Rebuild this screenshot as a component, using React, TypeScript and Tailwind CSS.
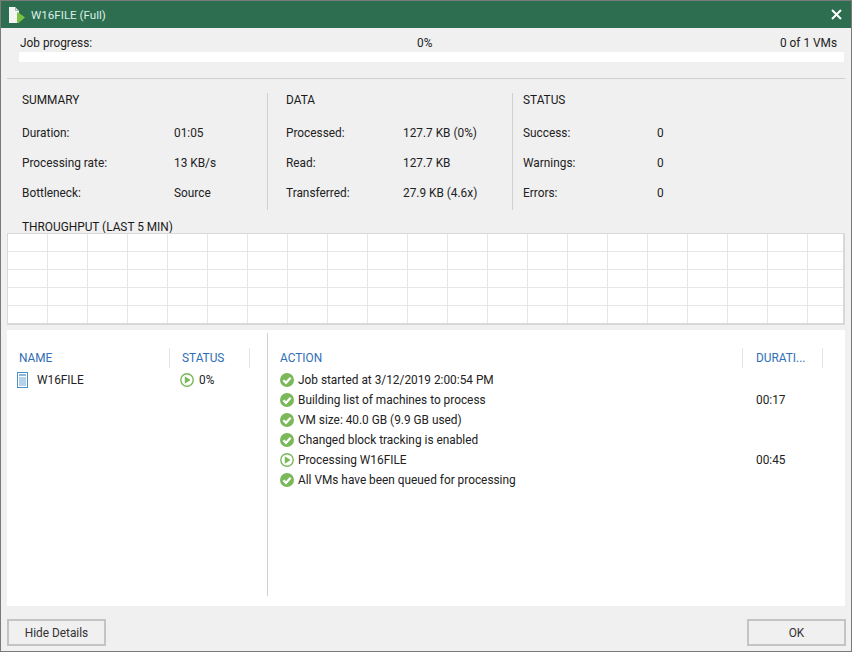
// Job session window: progress, stats, throughput grid and action log

const FONT = "font-['Roboto','Noto_Sans',sans-serif]";

type Stat = { label: string; value: string };

const summary: Stat[] = [
  { label: 'Duration:', value: '01:05' },
  { label: 'Processing rate:', value: '13 KB/s' },
  { label: 'Bottleneck:', value: 'Source' },
];
const data: Stat[] = [
  { label: 'Processed:', value: '127.7 KB (0%)' },
  { label: 'Read:', value: '127.7 KB' },
  { label: 'Transferred:', value: '27.9 KB (4.6x)' },
];
const status: Stat[] = [
  { label: 'Success:', value: '0' },
  { label: 'Warnings:', value: '0' },
  { label: 'Errors:', value: '0' },
];

const actions = [
  { text: 'Job started at 3/12/2019 2:00:54 PM', time: '', running: false },
  { text: 'Building list of machines to process', time: '00:17', running: false },
  { text: 'VM size: 40.0 GB (9.9 GB used)', time: '', running: false },
  { text: 'Changed block tracking is enabled', time: '', running: false },
  { text: 'Processing W16FILE', time: '00:45', running: true },
  { text: 'All VMs have been queued for processing', time: '', running: false },
];

function CheckIcon() {
  return (
    <svg width="14" height="14" viewBox="0 0 14 14" className="shrink-0">
      <circle cx="7" cy="7" r="7" fill="#7ab85a" />
      <path d="M3.4 7.2 6 9.8l4.6-5" fill="none" stroke="#fff" strokeWidth="2.2" />
    </svg>
  );
}

function PlayIcon() {
  return (
    <svg width="14" height="14" viewBox="0 0 14 14" className="shrink-0">
      <circle cx="7" cy="7" r="6.2" fill="#fff" stroke="#7ab85a" strokeWidth="1.4" />
      <path d="M4.8 3.2v7.6L10.6 7z" fill="#7ab85a" />
    </svg>
  );
}

function StatColumn({ title, rows, valueCol, className }: { title: string; rows: Stat[]; valueCol: string; className: string }) {
  return (
    <div className={className}>
      <div className="h-[14px] leading-[14px] text-[#1a1a1a]">{title}</div>
      <div className="mt-[18px] flex flex-col gap-[14px]">
        {rows.map((r) => (
          <div key={r.label} className="flex h-[16px] leading-[16px]">
            <span className={valueCol}>{r.label}</span>
            <span>{r.value}</span>
          </div>
        ))}
      </div>
    </div>
  );
}

export default function App() {
  return (
    <div className={`${FONT} w-[852px] h-[652px] flex flex-col border border-[#7a7a7a] bg-[#f0f0f0] text-[11.85px] text-[#222] overflow-hidden`}>
      {/* Title bar */}
      <div className="h-[27px] shrink-0 bg-[#2d6e50] flex items-center pl-[7px] pr-[8px] text-white">
        <svg width="18" height="18" viewBox="0 0 18 18" className="shrink-0">
          <path d="M1 1h6l4 4v12H1z" fill="#f4f4f4" />
          <path d="M7.5 1v3.5H11" fill="none" stroke="#9fb8ab" />
          <path d="M9 6.5h1.5L17 11.5 10.5 17H9z" fill="#7ac143" />
        </svg>
        <span className="ml-[5px] mt-[2px] text-[#dcefe6] text-[11.6px]">W16FILE (Full)</span>
        <svg width="11" height="11" viewBox="0 0 11 11" className="ml-auto mr-[1px]">
          <path d="M1 1l9 9M10 1l-9 9" stroke="#fff" strokeWidth="2" />
        </svg>
      </div>

      {/* Job progress */}
      <div className="h-[50px] shrink-0 pl-[18px] pr-[7px]">
        <div className="relative flex justify-between h-[16px] mt-[7px] leading-[16px] pr-[7px]">
          <span className="ml-[1px]">Job progress:</span>
          <span className="absolute left-[398px]">0%</span>
          <span>0 of 1 VMs</span>
        </div>
        <div className="h-[10px] mt-[1px] bg-white" />
      </div>
      <div className="h-px shrink-0 mx-[6px] bg-[#d0d0d0]" />

      {/* Summary, data and status */}
      <div className="h-[132px] shrink-0 flex pl-[21px] pt-[14px]">
        <StatColumn title="SUMMARY" rows={summary} valueCol="w-[152px]" className="w-[246px] h-[117px] border-r border-[#d0d0d0]" />
        <StatColumn title="DATA" rows={data} valueCol="w-[117px]" className="w-[245px] h-[117px] pl-[18px] border-r border-[#d0d0d0]" />
        <StatColumn title="STATUS" rows={status} valueCol="w-[134px]" className="pl-[10px]" />
      </div>

      {/* Throughput */}
      <div className="h-[14px] leading-[14px] pl-[21px] mt-[9px] shrink-0 text-[#1a1a1a]">THROUGHPUT (LAST 5 MIN)</div>
      <div className="mx-[6px] -mt-px h-[92px] shrink-0 border-2 border-t border-l border-[#d8d8d8] bg-white grid grid-cols-[repeat(21,40px)] grid-rows-[repeat(5,18px)] overflow-hidden">
        {Array.from({ length: 105 }).map((_, i) => (
          <div key={i} className="border-r border-b border-[#e6e6e6]" />
        ))}
      </div>

      {/* Details */}
      <div className="mx-[6px] mt-[5px] h-[276px] shrink-0 bg-white flex">
        <div className="w-[261px] pt-[15px] pl-[10px] h-[263px] mt-[3px] border-r border-[#d0d0d0]">
          <div className="flex h-[20px] text-[#2f6db5] leading-[20px]">
            <span className="w-[151px] ml-[2px] border-r border-[#e4e4e4]">NAME</span>
            <span className="w-[80px] pl-[12px] border-r border-[#e4e4e4]">STATUS</span>
          </div>
          <div className="flex items-center h-[20px] mt-[2px]">
            <svg width="11" height="16" viewBox="0 0 11 16" className="shrink-0">
              <rect x="0.5" y="0.5" width="10" height="15" fill="#fff" stroke="#4a90c8" />
              <rect x="2" y="2" width="7" height="2" fill="#8db8dc" />
              <rect x="2" y="5" width="7" height="9" fill="#b5d2ea" />
            </svg>
            <span className="ml-[9px] w-[143px] pt-[2px]">W16FILE</span>
            <PlayIcon />
            <span className="ml-[5px] pt-[2px]">0%</span>
          </div>
        </div>
        <div className="flex-1 pt-[15px] pl-[12px] mt-[3px]">
          <div className="flex h-[20px] text-[#2f6db5] leading-[20px]">
            <span className="w-[462px]">ACTION</span>
            <span className="w-[81px] pl-[13px] border-l border-r border-[#e4e4e4] truncate">DURATI...</span>
          </div>
          <div className="mt-[2px] flex flex-col">
            {actions.map((a) => (
              <div key={a.text} className="flex items-center h-[20px]">
                {a.running ? <PlayIcon /> : <CheckIcon />}
                <span className="ml-[4px] w-[458px] pt-[2px]">{a.text}</span>
                <span className="pt-[2px]">{a.time}</span>
              </div>
            ))}
          </div>
        </div>
      </div>

      {/* Footer */}
      <div className="flex justify-between pl-[6px] pr-[5px] mt-[13px]">
        <button className="w-[99px] h-[27px] pt-[2px] border-2 border-[#c4c4c4] bg-[#f0f0f0] text-[#333]">Hide Details</button>
        <button className="w-[99px] h-[27px] pt-[2px] border-2 border-[#c4c4c4] bg-[#f0f0f0] text-[#333]">OK</button>
      </div>
    </div>
  );
}
